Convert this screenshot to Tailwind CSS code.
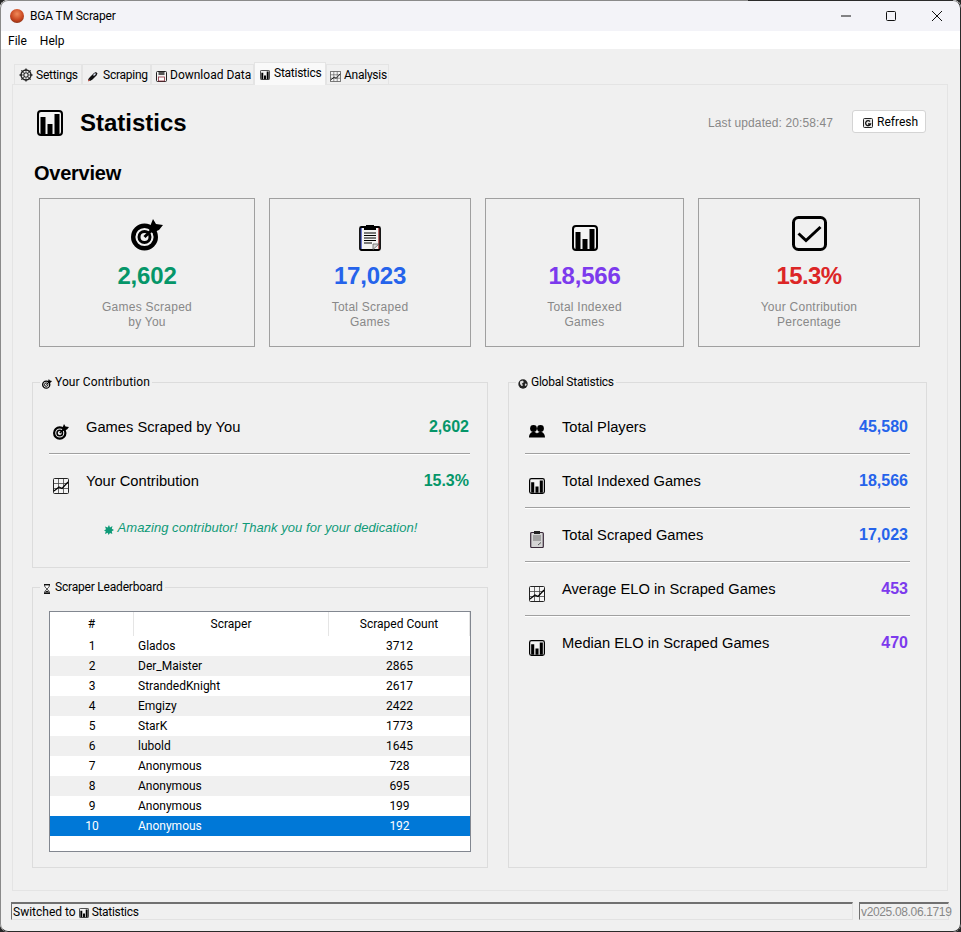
<!DOCTYPE html>
<html lang="en">
<head>
    <meta charset="UTF-8">
    <title>BGA TM Scraper</title>
    <script src="https://cdn.jsdelivr.net/npm/@tailwindcss/browser@4"></script>
</head>
<body class="bg-[#262626] font-['Roboto',sans-serif] text-[12px] text-black">

    <!-- icon set, reused through <use> -->
    <svg class="hidden" xmlns="http://www.w3.org/2000/svg">
        <symbol id="i-target" viewBox="0 0 32 32">
            <circle cx="13.500" cy="18" r="11.300" fill="none" stroke="#000" stroke-width="4.400"/>
            <circle cx="13.500" cy="18" r="5.500" fill="none" stroke="#000" stroke-width="3"/>
            <path d="M13.500 18 24 8" stroke="#000" stroke-width="3"/>
            <path d="M18 10 22 0l3 5 7 1-4 5-7 3z" fill="#000"/>
        </symbol>
        <symbol id="i-bars" viewBox="0 0 26 26">
            <rect x="1" y="1" width="24" height="24" rx="3" fill="#f4f4f4" stroke="#000" stroke-width="2"/>
            <path d="M3.500 7h5v17h-5zM10.500 14h5v10h-5zM17.500 4h5v20h-5z" fill="#000"/>
        </symbol>
        <symbol id="i-clip" viewBox="0 0 22 26">
            <rect x="1" y="2" width="20" height="23" rx="1.500" fill="#f4f4f4" stroke="#000" stroke-width="1.800"/>
            <path d="M2.200 3v21" stroke="#2b3fb8"/>
            <path d="M19.800 3v21" stroke="#a03030"/>
            <path d="M7 3h8V0H7z" fill="#000"/>
            <path d="M5 3h12v2H5z" fill="#000"/>
            <path d="M5 8h12M5 10.500h12M5 13h12M5 15.500h12M5 18h8" stroke="#000"/>
            <path d="M14 24.500 20 19h-6z" fill="#d8d8d8" stroke="#555" stroke-width=".7"/>
        </symbol>
        <symbol id="i-check" viewBox="0 0 35 35">
            <rect x="1.500" y="1.500" width="32" height="32" rx="5" fill="none" stroke="#000" stroke-width="3"/>
            <path d="M6.500 17.500 14 24.500 28.500 11" fill="none" stroke="#000" stroke-width="3"/>
        </symbol>
        <symbol id="i-chart" viewBox="0 0 16 16">
            <rect x=".5" y=".5" width="15" height="15" rx="1" fill="#f4f4f4" stroke="#222"/>
            <path d="M5.500 1v14M10.500 1v14M1 5.500h14M1 10.500h14" stroke="#444" stroke-width=".8"/>
            <path d="M1 13 6 9l3 1.500L15 4" fill="none" stroke="#000" stroke-width="1.200"/>
        </symbol>
        <symbol id="i-gear" viewBox="0 0 14 14">
            <circle cx="7" cy="7" r="5" fill="none" stroke="#222" stroke-width="1.300"/>
            <circle cx="7" cy="7" r="2.200" fill="none" stroke="#222" stroke-width="1.100"/>
            <path d="M7 .5v3M7 10.500v3M.5 7h3M10.500 7h3M2.400 2.400l2.200 2.200M9.400 9.400l2.200 2.200M11.600 2.400 9.400 4.600M4.600 9.400l-2.200 2.200" stroke="#222" stroke-width="1.300"/>
        </symbol>
        <symbol id="i-pen" viewBox="0 0 12 12">
            <path d="M1 9.500 3 7l4-4 2-1 1.500 1.500-1 2-4 4L3 11z" fill="#111"/>
            <path d="M1 10.500 2.500 9 3 10.500 1.500 11.500z" fill="#b03a2e"/>
            <path d="M6 5 8 3l1 1-2 2z" fill="#dfe6f5"/>
        </symbol>
        <symbol id="i-save" viewBox="0 0 11 11">
            <rect x=".5" y=".5" width="10" height="10" rx="1" fill="#f4f4f4" stroke="#222"/>
            <path d="M2.500 1h6v3h-6z" fill="#555"/>
            <rect x="2.500" y="6" width="6" height="4" fill="#fff" stroke="#8a2d3b" stroke-width=".8"/>
        </symbol>
        <symbol id="i-globe" viewBox="0 0 10 10">
            <circle cx="5" cy="5" r="4.700" fill="#222"/>
            <path d="M2 2.500 4.500 1.500 6 3 4 4.500 5 6.500 3.500 7 2 5zM7 4.500l1.800.5-.8 2-1.200-.5z" fill="#dcdcdc"/>
        </symbol>
        <symbol id="i-people" viewBox="0 0 16 14">
            <circle cx="4.500" cy="4.500" r="3.400" fill="#000"/>
            <circle cx="11.500" cy="4.500" r="3.400" fill="#000"/>
            <path d="M0 13.500c0-3.500 2-5.500 4.500-5.500 1.500 0 2.700.5 3.500 1.500.8-1 2-1.500 3.500-1.500 2.500 0 4.500 2 4.500 5.500z" fill="#000"/>
        </symbol>
        <symbol id="i-pad" viewBox="0 0 14 17">
            <rect x=".7" y="1.500" width="12.600" height="15" rx="1" fill="#d5d5d5" stroke="#3a2a3a" stroke-width="1.200"/>
            <path d="M4 0h6v3H4z" fill="#222"/>
            <path d="M3 5h8M3 7h8M3 9h8" stroke="#555" stroke-width=".8"/>
            <path d="M8 14l3-2.500" stroke="#555"/>
        </symbol>
        <symbol id="i-hour" viewBox="0 0 8 10">
            <path d="M1 .5h6M1 9.500h6" stroke="#111"/>
            <path d="M1.500 1c0 2 1.700 3 2.500 4 .8-1 2.500-2 2.500-4zM4 5c-.8 1-2.500 2-2.500 4h5C6.500 7 4.800 6 4 5z" fill="#fff" stroke="#111" stroke-width=".8"/>
            <path d="M2 8.500h4V8L4 6.500 2 8z" fill="#111"/>
        </symbol>
        <symbol id="i-refresh" viewBox="0 0 10 10">
            <rect x=".5" y=".5" width="9" height="9" rx="1" fill="#e8e8e8" stroke="#222"/>
            <path d="M7 3.500A2.500 2.500 0 1 0 7.500 6H5" fill="none" stroke="#111" stroke-width="1.300"/>
        </symbol>
        <symbol id="i-spark" viewBox="0 0 10 10">
            <path d="M5 0l1 2.500L8.500 1l-.7 2.700L10 5l-2.200 1.200.5 2.800L6 8l-1.500 2-.8-2.300L1 9l.7-2.800L0 5.500l2-1.200L1 1.500l2.700 1z" fill="#0f9a78"/>
        </symbol>
    </svg>

    <div class="relative w-[961px] h-[932px] rounded-[8px] overflow-hidden bg-[#f0f0f0] flex flex-col">
        <!-- title bar -->
        <div class="h-[31px] bg-[#f3f3f8] flex items-center shrink-0">
            <span class="ml-[10px] w-[14px] h-[14px] rounded-full bg-[radial-gradient(circle_at_50%_35%,#f08a5a,#c8451f_55%,#5c2415)]"></span>
            <span class="ml-[6px] tracking-[-0.15px]">BGA TM Scraper</span>
            <div class="ml-auto flex items-center">
                <svg class="w-[10px] h-[10px] mr-[35px]" viewBox="0 0 10 10"><path d="M0 5h10" stroke="#111"/></svg>
                <svg class="w-[10px] h-[10px] mr-[36px]" viewBox="0 0 10 10"><rect x=".5" y=".5" width="9" height="9" rx="1" fill="none" stroke="#111"/></svg>
                <svg class="w-[10px] h-[10px] mr-[19px]" viewBox="0 0 10 10"><path d="M0 0l10 10M10 0 0 10" stroke="#111"/></svg>
            </div>
        </div>
        <!-- menu -->
        <div class="h-[18px] bg-white flex items-center pl-[8px] pt-[2px] gap-[13px] shrink-0">
            <span>File</span><span>Help</span>
        </div>

        <!-- tabs -->
        <div class="h-[35px] pl-[14px] flex items-end shrink-0">
            <div class="h-[20px] w-[68px] bg-[#f0f0f0] border border-b-0 border-[#e4e4e4] flex items-center gap-[3px] pl-[4px] tracking-[-0.25px]">
                <svg class="w-[14px] h-[14px]"><use href="#i-gear"/></svg>Settings
            </div>
            <div class="h-[20px] w-[69px] bg-[#f0f0f0] border border-b-0 border-[#e4e4e4] flex items-center gap-[4px] pl-[4px] tracking-[-0.25px]">
                <svg class="w-[12px] h-[12px] mt-[2px]"><use href="#i-pen"/></svg>Scraping
            </div>
            <div class="h-[20px] w-[103px] bg-[#f0f0f0] border border-b-0 border-[#e4e4e4] flex items-center gap-[3px] pl-[4px]">
                <svg class="w-[11px] h-[11px] mt-[3px]"><use href="#i-save"/></svg>Download Data
            </div>
            <div class="relative z-10 h-[23px] w-[72px] -mb-px bg-[#f9f9f9] border border-b-0 border-[#e4e4e4] flex items-center gap-[4px] pl-[5px] pb-[2px] tracking-[-0.25px]">
                <svg class="w-[10px] h-[10px] mt-[3px]"><use href="#i-bars"/></svg>Statistics
            </div>
            <div class="h-[20px] w-[63px] bg-[#f0f0f0] border border-b-0 border-[#e4e4e4] flex items-center gap-[3px] pl-[3px] tracking-[-0.25px]">
                <svg class="w-[11px] h-[11px] mt-[3px]"><use href="#i-chart"/></svg>Analysis
            </div>
        </div>

        <!-- tab pane -->
        <div class="ml-[12px] w-[936px] h-[807px] border border-[#e4e4e4] shrink-0 font-['Liberation_Sans',sans-serif]">
            <div class="mt-[25px] ml-[24px] mr-[21px] h-[26px] flex items-center">
                <svg class="w-[26px] h-[26px] mr-[17px]"><use href="#i-bars"/></svg>
                <h1 class="text-[24px] leading-[28px] font-bold">Statistics</h1>
                <span class="ml-auto mr-[19px] text-[#888888] tracking-[0.1px]">Last updated: 20:58:47</span>
                <button class="self-start w-[74px] h-[23px] bg-white border border-[#d4d4d4] rounded-[3px] flex items-center gap-[4px] pl-[10px] font-['Roboto',sans-serif]">
                    <svg class="w-[10px] h-[10px] mt-[2px]"><use href="#i-refresh"/></svg>Refresh
                </button>
            </div>

            <h2 class="mt-[25px] ml-[21px] text-[20px] leading-[24px] font-bold tracking-[-0.25px]">Overview</h2>

            <!-- overview cards -->
            <div class="mt-[13px] ml-[26px] flex gap-[14px]">
                <div class="w-[216px] h-[149px] border border-[#a0a0a0] flex flex-col items-center">
                    <div class="h-[52px] flex items-end"><svg class="w-[32px] h-[32px]"><use href="#i-target"/></svg></div>
                    <div class="mt-[11px] text-[24px] leading-[28px] font-bold tracking-[-0.2px] text-[#059669]">2,602</div>
                    <div class="mt-[10px] text-center leading-[15px] tracking-[0.25px] text-[#888888]">Games Scraped<br>by You</div>
                </div>
                <div class="w-[202px] h-[149px] border border-[#a0a0a0] flex flex-col items-center">
                    <div class="h-[52px] flex items-end"><svg class="w-[22px] h-[26px]"><use href="#i-clip"/></svg></div>
                    <div class="mt-[11px] text-[24px] leading-[28px] font-bold tracking-[-0.2px] text-[#2563eb]">17,023</div>
                    <div class="mt-[10px] text-center leading-[15px] tracking-[0.25px] text-[#888888]">Total Scraped<br>Games</div>
                </div>
                <div class="w-[199px] h-[149px] border border-[#a0a0a0] flex flex-col items-center">
                    <div class="h-[52px] flex items-end"><svg class="w-[26px] h-[26px]"><use href="#i-bars"/></svg></div>
                    <div class="mt-[11px] text-[24px] leading-[28px] font-bold tracking-[-0.2px] text-[#7c3aed]">18,566</div>
                    <div class="mt-[10px] text-center leading-[15px] tracking-[0.25px] text-[#888888]">Total Indexed<br>Games</div>
                </div>
                <div class="w-[222px] h-[149px] border border-[#a0a0a0] flex flex-col items-center">
                    <div class="h-[52px] flex items-end"><svg class="w-[35px] h-[35px]"><use href="#i-check"/></svg></div>
                    <div class="mt-[11px] text-[24px] leading-[28px] font-bold tracking-[-0.6px] text-[#dc2626]">15.3%</div>
                    <div class="mt-[10px] text-center leading-[15px] tracking-[0.25px] text-[#888888]">Your Contribution<br>Percentage</div>
                </div>
            </div>

            <div class="mt-[28px] ml-[19px] flex gap-[20px]">
                <div class="w-[456px] flex flex-col gap-[12px]">
                    <fieldset class="h-[193px] border border-[#dcdcdc]">
                        <legend class="ml-[7px] px-[2px] h-[14px] leading-[14px] flex items-center gap-[3px] tracking-[0.1px] font-['Roboto',sans-serif]">
                            <svg class="w-[10px] h-[10px] mt-[3px]"><use href="#i-target"/></svg>Your Contribution
                        </legend>
                        <div class="pt-[11px] ml-[16px] w-[421px]">
                            <div class="h-[54px] border-b border-[#a0a0a0] shadow-[0_1px_0_#fff] flex items-center">
                                <svg class="ml-[4px] mr-[17px] mt-[10px] w-[16px] h-[16px]"><use href="#i-target"/></svg>
                                <span class="mt-[2px] text-[14.7px]">Games Scraped by You</span>
                                <span class="ml-auto mr-[1px] text-[16px] font-bold text-[#059669]">2,602</span>
                            </div>
                            <div class="h-[54px] border-b border-transparent flex items-center">
                                <svg class="ml-[4px] mr-[17px] mt-[10px] w-[16px] h-[16px]"><use href="#i-chart"/></svg>
                                <span class="mt-[2px] text-[14.7px]">Your Contribution</span>
                                <span class="ml-auto mr-[1px] text-[16px] font-bold text-[#059669]">15.3%</span>
                            </div>
                            <p class="mt-[12px] ml-[2px] flex items-center justify-center gap-[4px] text-[13px] leading-[16px] tracking-[0.04px] italic text-[#0f9a78]">
                                <svg class="w-[10px] h-[10px] mt-[3px]"><use href="#i-spark"/></svg>Amazing contributor! Thank you for your dedication!
                            </p>
                        </div>
                    </fieldset>

                    <fieldset class="h-[288px] border border-[#dcdcdc]">
                        <legend class="ml-[7px] px-[2px] h-[14px] leading-[14px] flex items-center gap-[3px] tracking-[-0.2px] font-['Roboto',sans-serif]">
                            <svg class="w-[10px] h-[10px] mt-[3px]"><use href="#i-hour"/></svg>Scraper Leaderboard
                        </legend>
                        <div class="mt-[17px] ml-[16px] w-[422px] h-[241px] bg-white border border-[#828790] font-['Roboto',sans-serif]">
                            <div class="h-[24px] grid grid-cols-[84px_195px_141px] text-center leading-[24px]">
                                <div class="border-r border-[#e5e5e5]">#</div>
                                <div class="border-r border-[#e5e5e5]">Scraper</div>
                                <div class="border-r border-[#e5e5e5]">Scraped Count</div>
                            </div>
                            <div id="leaderboard"></div>
                        </div>
                    </fieldset>
                </div>

                <fieldset class="w-[419px] h-[493px] border border-[#dcdcdc]">
                    <legend class="ml-[7px] px-[2px] h-[14px] leading-[14px] flex items-center gap-[3px] tracking-[-0.25px] font-['Roboto',sans-serif]">
                        <svg class="w-[10px] h-[10px] mt-[3px]"><use href="#i-globe"/></svg>Global Statistics
                    </legend>
                    <div class="pt-[11px] ml-[16px] w-[385px]">
                        <div class="h-[54px] border-b border-[#a0a0a0] shadow-[0_1px_0_#fff] flex items-center">
                            <svg class="ml-[4px] mr-[17px] mt-[8px] w-[16px] h-[14px]"><use href="#i-people"/></svg>
                            <span class="mt-[2px] text-[14.7px]">Total Players</span>
                            <span class="ml-auto mr-[2px] text-[16px] font-bold text-[#2563eb]">45,580</span>
                        </div>
                        <div class="h-[54px] border-b border-[#a0a0a0] shadow-[0_1px_0_#fff] flex items-center">
                            <svg class="ml-[4px] mr-[17px] mt-[10px] w-[16px] h-[16px]"><use href="#i-bars"/></svg>
                            <span class="mt-[2px] text-[14.7px]">Total Indexed Games</span>
                            <span class="ml-auto mr-[2px] text-[16px] font-bold text-[#2563eb]">18,566</span>
                        </div>
                        <div class="h-[54px] border-b border-[#a0a0a0] shadow-[0_1px_0_#fff] flex items-center">
                            <svg class="ml-[5px] mr-[18px] mt-[10px] w-[14px] h-[17px]"><use href="#i-pad"/></svg>
                            <span class="mt-[2px] text-[14.7px]">Total Scraped Games</span>
                            <span class="ml-auto mr-[2px] text-[16px] font-bold text-[#2563eb]">17,023</span>
                        </div>
                        <div class="h-[54px] border-b border-[#a0a0a0] shadow-[0_1px_0_#fff] flex items-center">
                            <svg class="ml-[4px] mr-[17px] mt-[10px] w-[16px] h-[16px]"><use href="#i-chart"/></svg>
                            <span class="mt-[2px] text-[14.7px]">Average ELO in Scraped Games</span>
                            <span class="ml-auto mr-[2px] text-[16px] font-bold text-[#7c3aed]">453</span>
                        </div>
                        <div class="h-[54px] border-b border-transparent flex items-center">
                            <svg class="ml-[4px] mr-[17px] mt-[10px] w-[16px] h-[16px]"><use href="#i-bars"/></svg>
                            <span class="mt-[2px] text-[14.7px]">Median ELO in Scraped Games</span>
                            <span class="ml-auto mr-[2px] text-[16px] font-bold text-[#7c3aed]">470</span>
                        </div>
                    </div>
                </fieldset>
            </div>
        </div>

        <!-- status bar -->
        <div class="mt-[11px] ml-[11px] flex gap-[6px] h-[18px] shrink-0">
            <div class="w-[842px] border border-t-2 border-[#e2e2e2] border-t-[#707070] border-l-[#707070] flex items-center gap-[3px] pl-[1px]">
                Switched to <svg class="w-[10px] h-[10px] mt-[2px]"><use href="#i-bars"/></svg> <span class="tracking-[-0.3px]">Statistics</span>
            </div>
            <div class="w-[90px] border border-t-2 border-[#e2e2e2] border-t-[#707070] border-l-[#707070] flex items-center pl-[1px] font-['Liberation_Sans',sans-serif] text-[#888888] tracking-[-0.35px] whitespace-nowrap">v2025.08.06.1719</div>
        </div>

        <!-- window frame -->
        <div class="absolute inset-0 rounded-[8px] border border-[#8a8a8a] border-r-[#2a2a2a] border-b-[#2a2a2a] pointer-events-none"></div>
        <div class="absolute top-0 left-[748px] right-[8px] h-px bg-[#2a2a2a]"></div>
    </div>

    <script>
        const leaderboard = [
            ["Glados", 3712], ["Der_Maister", 2865], ["StrandedKnight", 2617], ["Emgizy", 2422], ["StarK", 1773],
            ["lubold", 1645], ["Anonymous", 728], ["Anonymous", 695], ["Anonymous", 199], ["Anonymous", 192]
        ];

        document.getElementById('leaderboard').innerHTML = leaderboard.map(([name, count], i) => {
            let rowClass = i % 2 ? 'bg-[#f0f0f0]' : 'bg-white';
            if (i === 9) rowClass = 'bg-[#0078d7] text-white';
            return `
                <div class="h-[20px] grid grid-cols-[84px_195px_141px] leading-[20px] ${rowClass}">
                    <div class="text-center">${i + 1}</div>
                    <div class="pl-[4px]">${name}</div>
                    <div class="text-center">${count}</div>
                </div>`;
        }).join('');
    </script>
</body>
</html>
